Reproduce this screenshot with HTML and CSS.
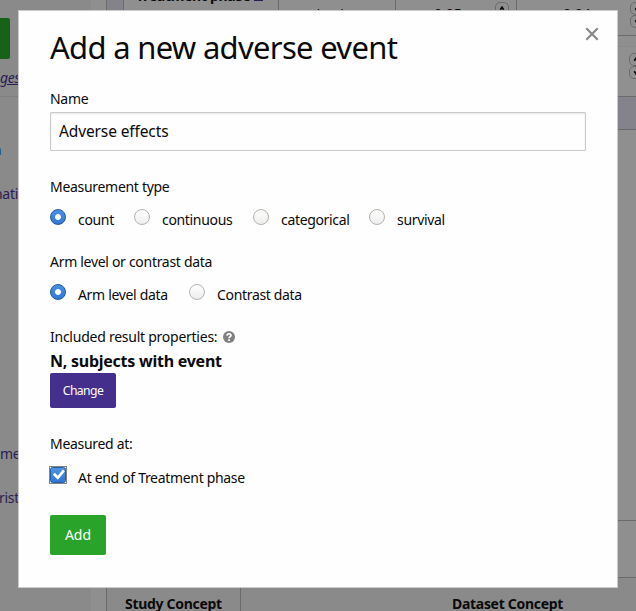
FILE: index.html
```html
<!DOCTYPE html>
<html lang="en">
<head>
<meta charset="utf-8">
<title>Add a new adverse event</title>
<link rel="stylesheet" href="styles.css">
</head>
<body>
<div class="page">
  <aside class="sidebar">
    <div class="save"></div>
    <span class="side-text changes">ges</span>
    <span class="side-text side-a">n</span>
    <span class="side-text side-b">nati</span>
    <span class="side-text side-c">me</span>
    <span class="side-text side-d">rist</span>
  </aside>
  <main class="content">
    <div class="baseline">
      <div class="cell"></div>
      <div class="cell phase">Treatment phase <i class="mark"></i></div>
      <div class="cell unit">absolute</div>
      <div class="cell value"><span class="number">0.05</span><span class="spinner"><svg viewBox="0 0 13 13"><path d="M4.5 8 6.5 5l2 3"/></svg></span></div>
      <div class="cell value last"><span class="number">0.04</span><span class="spinners"><span class="spinner"><svg viewBox="0 0 13 13"><path d="M4.5 8 6.5 5l2 3"/></svg></span><span class="spinner"><svg viewBox="0 0 13 13"><path d="M4.5 5 6.5 8l2-3"/></svg></span></span></div>
    </div>
    <div class="gap"></div>
    <div class="entry"><span class="spinners"><span class="spinner"><svg viewBox="0 0 13 13"><path d="M4.5 8 6.5 5l2 3"/></svg></span><span class="spinner"><svg viewBox="0 0 13 13"><path d="M4.5 5 6.5 8l2-3"/></svg></span></span></div>
    <div class="band"></div>
    <div class="panel"></div>
    <div class="panel-foot"></div>
    <div class="concepts">
      <div class="concept study">Study Concept</div>
      <div class="concept dataset">Dataset Concept</div>
    </div>
  </main>
</div>
<section class="modal" role="dialog" aria-labelledby="title">
  <svg class="close" viewBox="0 0 14 14"><path d="M1.3 1.3 12.7 12.7M12.7 1.3 1.3 12.7"/></svg>
  <h1 id="title">Add a new adverse event</h1>
  <label class="label name" for="name">Name</label>
  <input id="name" class="input" type="text" value="Adverse effects">
  <div class="label group-label">Measurement type</div>
  <div class="options">
    <label class="option count"><i class="radio on"></i><span>count</span></label>
    <label class="option continuous"><i class="radio"></i><span>continuous</span></label>
    <label class="option categorical"><i class="radio"></i><span>categorical</span></label>
    <label class="option"><i class="radio"></i><span>survival</span></label>
  </div>
  <div class="label level-label">Arm level or contrast data</div>
  <div class="options">
    <label class="option arm"><i class="radio on"></i><span>Arm level data</span></label>
    <label class="option"><i class="radio"></i><span>Contrast data</span></label>
  </div>
  <div class="label props-label"><span>Included result properties:</span><svg class="help" viewBox="0 0 12 12"><circle cx="6" cy="6" r="6"/><path d="M4 4.6C4.1 2.2 8.2 2.3 8 4.5 7.9 5.7 6.1 5.7 6.1 7.3M6.1 8.3v1.6"/></svg></div>
  <div class="props">N, subjects with event</div>
  <button class="change">Change</button>
  <div class="label at-label">Measured at:</div>
  <label class="check"><svg class="box" viewBox="0 0 18 18"><defs><linearGradient id="blue" x2="0" y2="1"><stop stop-color="#5294e2"/><stop offset="1" stop-color="#2f76d2"/></linearGradient></defs><rect class="fill" x="1.5" y="1.5" width="15" height="15" rx="2"/><rect class="focus" x=".5" y=".5" width="17" height="17"/><path d="m4.8 7.8 4 4 6.1-7.5"/></svg><span>At end of Treatment phase</span></label>
  <button class="add">Add</button>
</section>
</body>
</html>
```

FILE: styles.css
```css
* { box-sizing: border-box; }
body {
  margin: 0;
  height: 611px;
  overflow: hidden;
  position: relative;
  background: #8f8f8f;
  color: #0a0a0a;
  font: 14px/20px "Noto Sans", sans-serif;
}
.page { display: grid; grid-template-columns: 91px 530px; column-gap: 15px; height: 611px; }
.sidebar {
  display: flex;
  flex-direction: column;
  background: #8a8a8a;
  color: #2b1c52;
  overflow: hidden;
}
.save { width: 10px; height: 41px; margin-top: 18px; background: #186118; border-radius: 0 2px 2px 0; }
.side-text { height: 20px; white-space: nowrap; letter-spacing: -.3px; }
.changes { margin-top: 9px; font-style: italic; text-decoration: underline; height: 29px; border-bottom: 1px solid #808080; }
.side-a { margin: 43px 0 0 -7px; color: #173c78; }
.side-b { margin: 24px 0 0 -6px; }
.side-c { margin-top: 240px; }
.side-d { margin: 24px 0 0 -1px; }
.content { display: flex; flex-direction: column; border-left: 1px solid #6b6b6b; }
.baseline { display: grid; grid-template-columns: 17px 155px 117px 121px 120px; height: 36px; border-bottom: 1px solid #6b6b6b; }
.cell { border-right: 1px solid #6b6b6b; height: 35px; line-height: 20px; }
.cell:first-child { background: #84838b; }
.last { border-right: 0; }
.phase { font-weight: bold; padding-left: 12px; margin-top: -14px; height: 49px; letter-spacing: -.3px; white-space: nowrap; }
.mark { display: inline-block; width: 9px; height: 4px; background: #2b1c52; }
.unit { text-align: center; padding-top: 5px; }
.value { display: flex; justify-content: space-between; padding: 2px 7px 0 38px; }
.number { padding-top: 2px; }
.last { padding: 2px 0 0 46px; }
.spinner { display: block; width: 14px; height: 13px; border: 1px solid #6b6b6b; border-radius: 5px; }
.spinner svg { display: block; width: 12px; height: 11px; fill: none; stroke: #0a0a0a; stroke-width: 2; }
.spinners { margin-right: -7px; }
.gap { height: 10px; }
.entry { height: 50px; background: #909090; border-top: 1px solid #898989; display: flex; justify-content: flex-end; padding-top: 6px; }
.band { height: 34px; background: #84838b; border: solid #6b6b6b; border-width: 1px 0; }
.panel { height: 391px; border-bottom: 1px solid #6b6b6b; }
.panel-foot { height: 57px; border-bottom: 1px solid #6b6b6b; }
.concepts { display: grid; grid-template-columns: 134px 396px; height: 33px; background: #8a8a8a; font-weight: bold; }
.concept { padding-top: 16px; white-space: nowrap; letter-spacing: -.3px; }
.study { border-right: 1px solid #6b6b6b; padding-left: 18px; }
.dataset { padding-left: 211px; }

.modal {
  position: absolute;
  left: 18px;
  top: 10px;
  width: 600px;
  height: 578px;
  padding: 15px 31px 0;
  border: 1px solid #cacaca;
  background: #fefefe;
  display: flex;
  flex-direction: column;
  align-items: flex-start;
}
.close { position: absolute; left: 566px; top: 16px; width: 14px; height: 14px; fill: none; stroke: #8a8a8a; stroke-width: 2.2; }
h1 { margin: 0; height: 45px; font-weight: 400; font-size: 31px; line-height: 43px; letter-spacing: -.7px; white-space: nowrap; }
.label { height: 24px; line-height: 24px; letter-spacing: -.3px; white-space: nowrap; }
.name { margin-top: 16px; }
.input {
  width: 536px;
  height: 39px;
  margin-top: 1px;
  padding: 0 8px 1px;
  border: 1px solid #cacaca;
  border-radius: 1px;
  box-shadow: inset 0 1px 2px rgba(10, 10, 10, .1);
  background: #fefefe;
  color: #0a0a0a;
  font: 15.5px "Noto Sans", sans-serif;
  letter-spacing: -.12px;
}
.group-label { margin-top: 24px; }
.options { display: flex; height: 24px; margin-top: 8px; line-height: 24px; letter-spacing: -.33px; }
.option { display: flex; gap: 12px; padding-top: 1px; white-space: nowrap; }
.count { width: 84px; }
.continuous { width: 119px; }
.categorical { width: 116px; }
.arm { width: 139px; }
.radio { width: 16px; height: 16px; margin-top: 1px; border: 1px solid #b8b2ac; border-radius: 50%; background: linear-gradient(#fff, #ededed); }
.radio.on { border-color: #20599f; background: radial-gradient(circle, #fff 2.5px, transparent 3.4px), linear-gradient(#4a90e2, #3079d6); }
.level-label { margin-top: 19px; }
.props-label { display: flex; gap: 6px; margin-top: 19px; letter-spacing: -.25px; }
.help { width: 12px; height: 12px; margin-top: 6px; }
.help circle { fill: #808080; }
.help path { fill: none; stroke: #fff; stroke-width: 1.7; }
.props { height: 24px; line-height: 25px; font-size: 16px; font-weight: bold; letter-spacing: -.25px; white-space: nowrap; }
button { padding: 0 0 2px; border: 0; border-radius: 2px; color: #fefefe; font: 14px "Noto Sans", sans-serif; }
.change { width: 66px; height: 35px; padding: 0; background: #452f8c; font-size: 12.2px; letter-spacing: -.6px; }
.at-label { margin-top: 24px; }
.check { display: flex; height: 24px; margin: 9px 0 0 -1px; gap: 11px; line-height: 26px; letter-spacing: -.32px; white-space: nowrap; }
.box { width: 18px; height: 18px; margin-top: 1px; }
.focus { fill: none; stroke: #0a0a0a; stroke-dasharray: 1 1; }
.fill { fill: url(#blue); stroke: #245da9; }
.box path { fill: none; stroke: #fff; stroke-width: 2.7; }
.add { width: 56px; height: 40px; margin-top: 26px; background: #29a329; }
```
